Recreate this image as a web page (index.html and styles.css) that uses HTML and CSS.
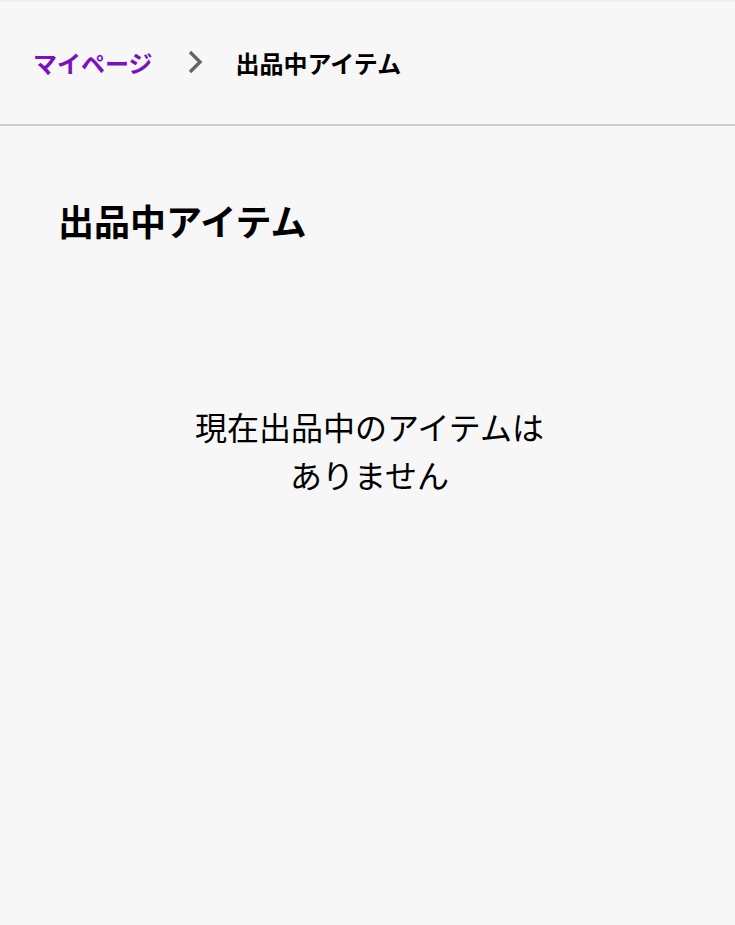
FILE: index.html
```html
<!DOCTYPE html>
<html lang="ja">
<head>
<meta charset="utf-8">
<link rel="stylesheet" href="styles.css">
</head>
<body>
<header class="topbar">
  <nav class="crumbs">
    <a class="crumb-link" href="#">マイページ</a>
    <svg class="crumb-sep" width="15" height="24" viewBox="0 0 15 24"><path d="M2 2 L12 12 L2 22" fill="none" stroke="#666" stroke-width="3.4"/></svg>
    <span class="crumb-current">出品中アイテム</span>
  </nav>
</header>
<main class="content">
  <h1 class="title">出品中アイテム</h1>
  <p class="empty">現在出品中のアイテムはありません</p>
</main>
</body>
</html>
```
FILE: styles.css
```css
html, body {
  margin: 0;
  padding: 0;
  background: #f7f7f7;
}
body {
  font-family: "Noto Sans CJK JP", "Noto Sans", sans-serif;
  color: #000;
}
.topbar {
  height: 124px;
  border-bottom: 2px solid #cccccc;
  box-shadow: inset 0 3px 3px -2px rgba(0,0,0,0.05);
  display: flex;
  align-items: center;
  padding: 0 33px;
}
.crumbs {
  display: flex;
  align-items: center;
  font-size: 24px;
  font-weight: 700;
}
.crumb-link {
  color: #7a10c2;
  text-decoration: none;
}
.crumb-sep {
  margin: 0 33px 0 35px;
}
.crumb-current {
  color: #000;
}
.content {
  padding: 0 58px;
}
.title {
  margin: 67px 0 0;
  font-size: 36px;
  line-height: 54px;
  font-weight: 700;
}
.empty {
  box-sizing: border-box;
  margin: 155px auto 0;
  max-width: 364px;
  padding-left: 4px;
  text-align: center;
  font-size: 32px;
  line-height: 48px;
}
```
